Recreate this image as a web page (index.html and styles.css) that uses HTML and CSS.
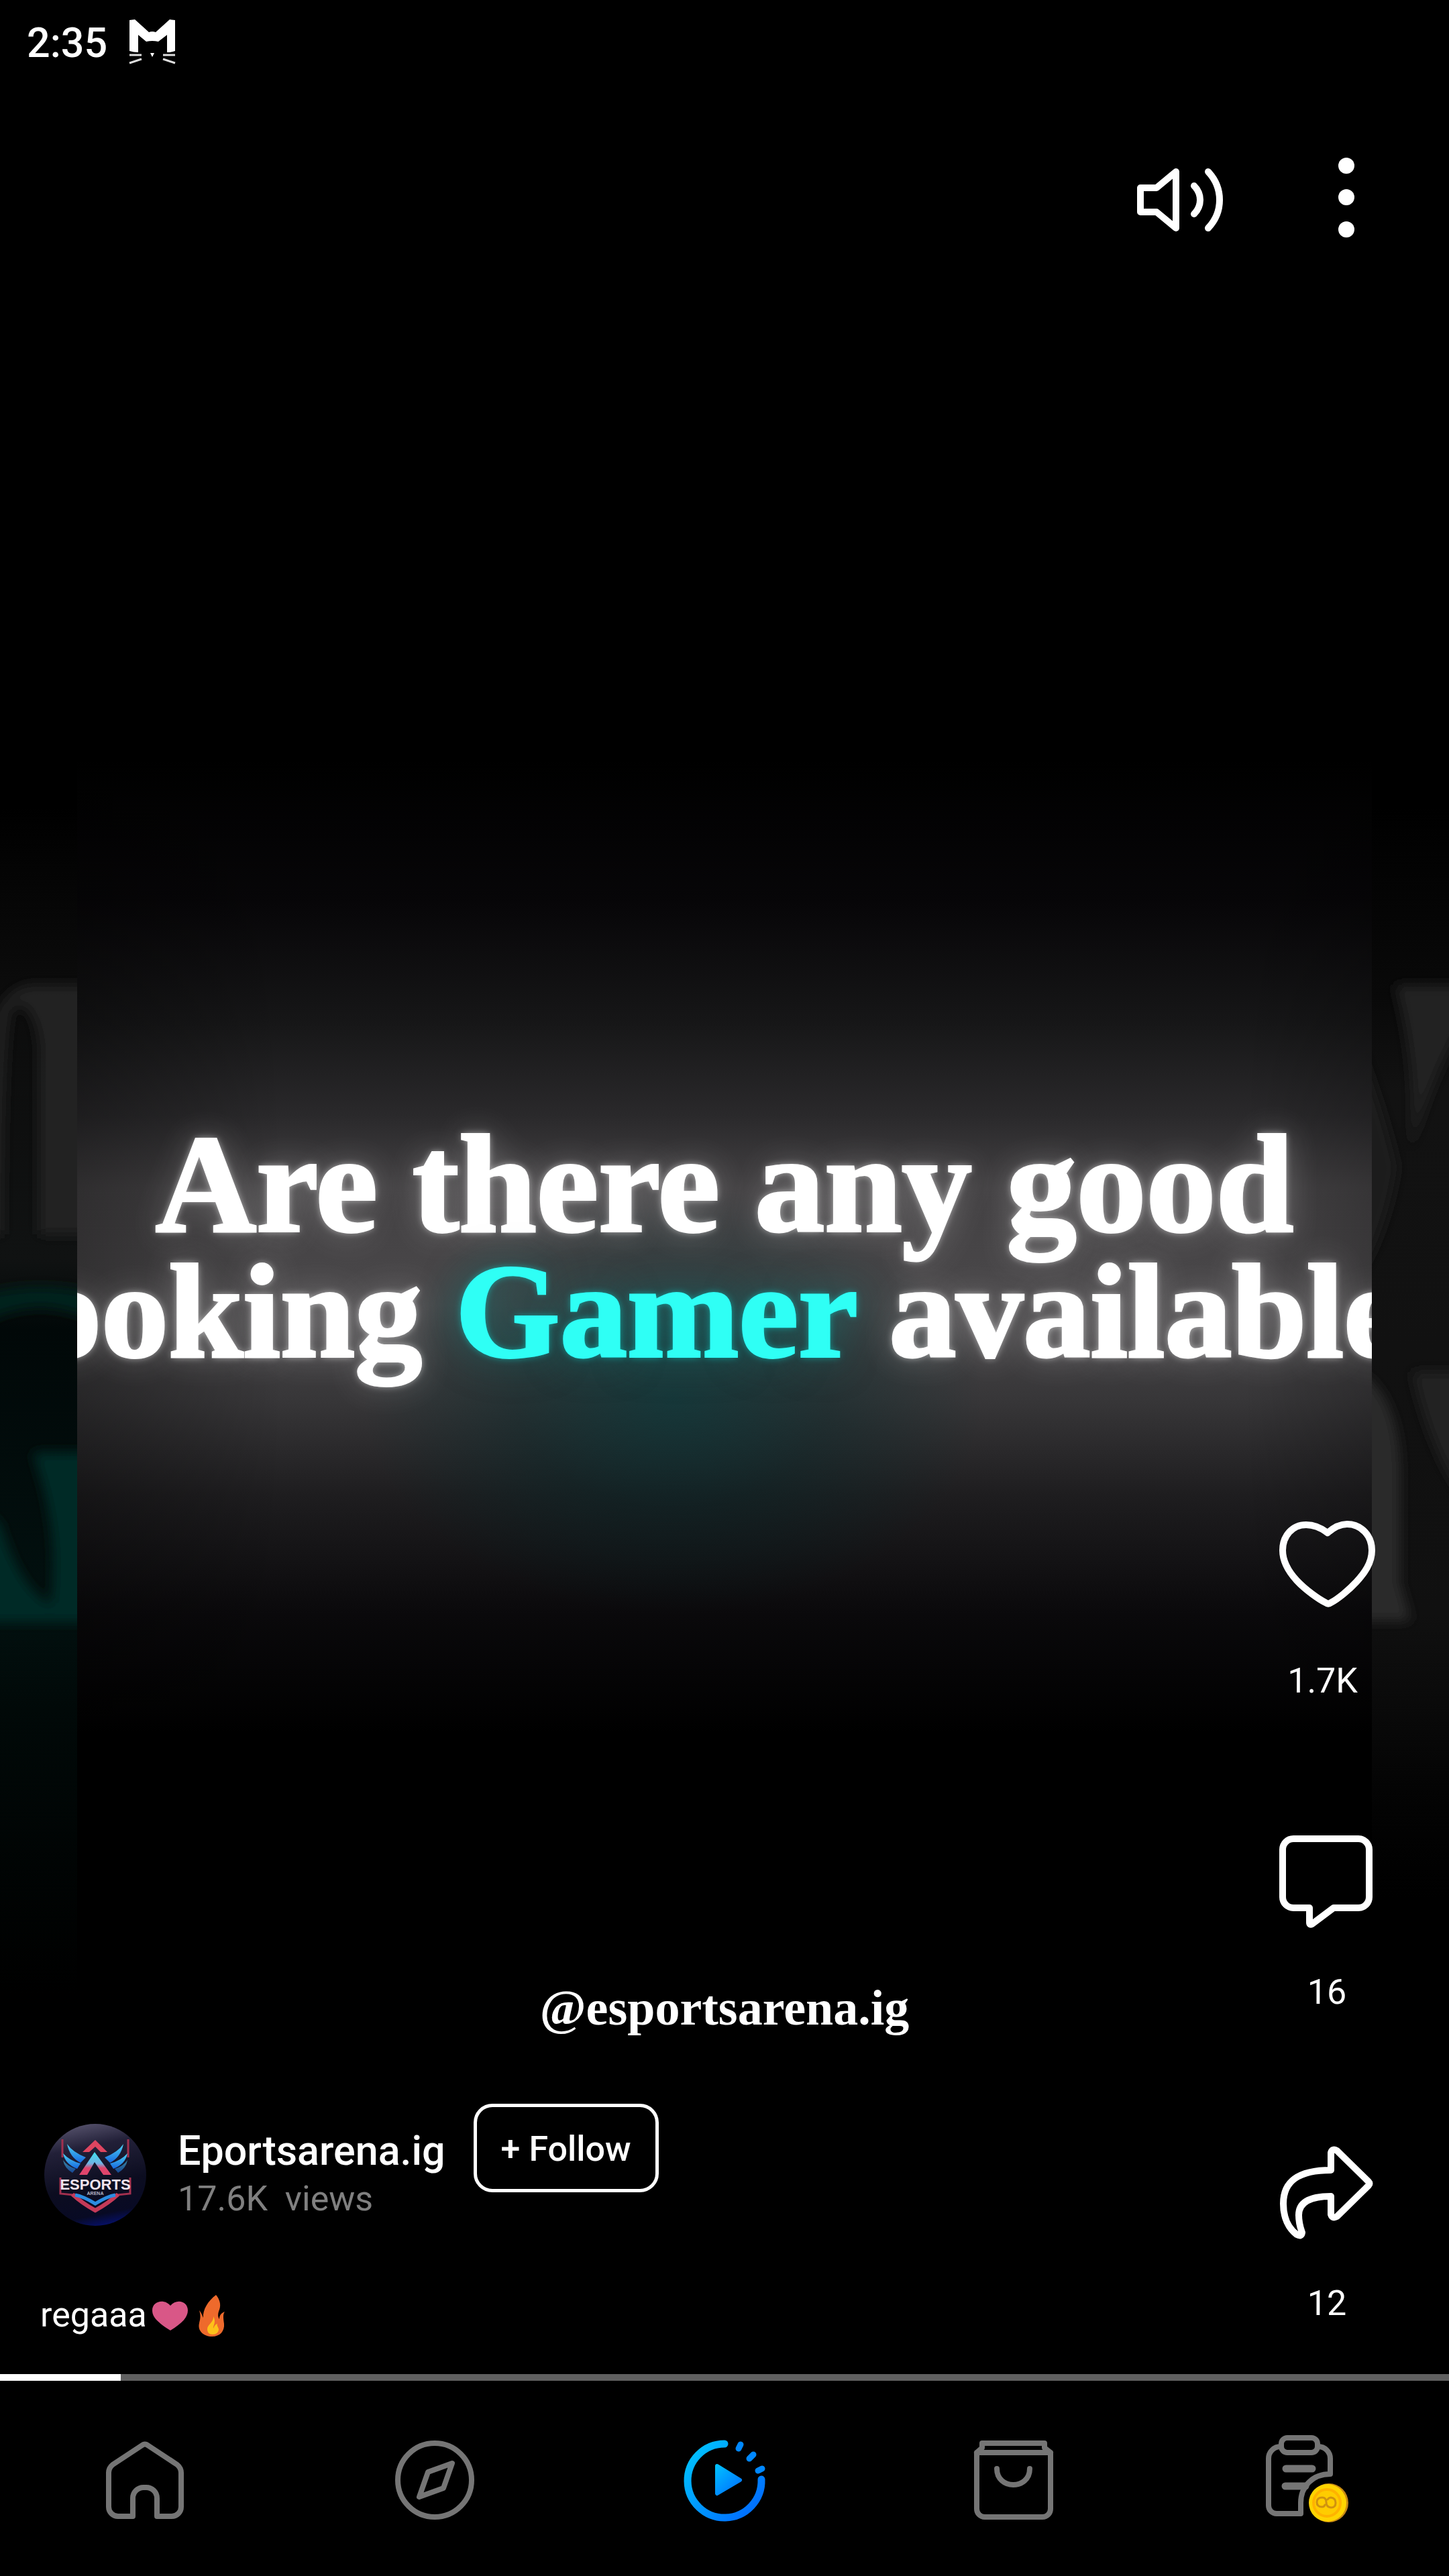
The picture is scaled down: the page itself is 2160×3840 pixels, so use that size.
FILE: index.html
```html
<!DOCTYPE html>
<html lang="en">
<head>
<meta charset="utf-8">
<meta name="viewport" content="width=device-width, initial-scale=1">
<title>Eportsarena.ig</title>
<link rel="stylesheet" href="styles.css">
</head>
<body>
<main class="stage">
  <div class="backdrop" aria-hidden="true">
    <svg class="side" viewBox="0 0 115 3539" preserveAspectRatio="none">
      <defs>
        <linearGradient id="fadeLeft" x1="0" y1="0" x2="0" y2="1">
          <stop offset=".34" stop-color="#000"/><stop offset=".42" stop-color="#0c0c0c"/>
          <stop offset=".53" stop-color="#101212"/><stop offset=".56" stop-color="#010808"/>
          <stop offset=".68" stop-color="#02100f"/><stop offset=".72" stop-color="#010908"/>
          <stop offset=".84" stop-color="#000"/>
        </linearGradient>
        <filter id="soft" x="-50%" y="-50%" width="200%" height="200%"><feGaussianBlur stdDeviation="9"/></filter>
      </defs>
      <rect width="115" height="3539" fill="url(#fadeLeft)"/>
      <g filter="url(#soft)">
        <path d="M-30 1600Q-10 1468 50 1468H150V1840H58V1560Q50 1490 20 1500Q4 1510 4 1840H-30Z" fill="#242424"/>
        <path d="M-30 1975V1930Q60 1905 150 1930V1975Q60 1925 -30 1975Z" fill="#04231f"/>
        <path d="M48 2165H150V2418H-40V2240L0 2270Q30 2370 76 2392Q90 2280 48 2165Z" fill="#042a26"/>
      </g>
    </svg>
    <svg class="side" viewBox="0 0 115 3539" preserveAspectRatio="none">
      <defs>
        <linearGradient id="fadeRight" x1="0" y1="0" x2="0" y2="1">
          <stop offset=".34" stop-color="#000"/><stop offset=".42" stop-color="#090909"/>
          <stop offset=".46" stop-color="#121212"/><stop offset=".68" stop-color="#101010"/>
          <stop offset=".76" stop-color="#030303"/><stop offset=".8" stop-color="#000"/>
        </linearGradient>
      </defs>
      <rect width="115" height="3539" fill="url(#fadeRight)"/>
      <g filter="url(#soft)">
        <path d="M34 1468H150V1500Q90 1600 58 1715Q68 1590 34 1468Z" fill="#242424"/>
        <path d="M-30 1530Q15 1640 38 1740Q20 1850 -30 1920Z" fill="#1b1b1b"/>
        <path d="M-30 2040Q42 2070 42 2200V2360L58 2416H-30Z" fill="#292929"/>
        <path d="M60 2045H150V2250Q90 2180 60 2045Z" fill="#242424"/>
      </g>
    </svg>
  </div>

  <section class="frame">
    <p class="headline"><span class="line">Are there any good</span><span class="line line-wide">looking <em class="accent">Gamer</em> available</span></p>
    <p class="watermark">@esportsarena.ig</p>
  </section>

  <div class="overlay">
    <header class="status">
      <time class="clock">2:35</time>
      <svg class="cat" viewBox="0 0 70 68" role="img" aria-label="Cat">
        <path fill="#fff" d="M1 2L9 1 30 20Q35 18 40 20L61 1 69 2V48Q64 50 57 50V24L44 34Q35 32 26 34L14 24V50Q7 50 1 48ZM32 51H38L35 57Z"/>
        <path fill="none" stroke="#ddd" stroke-width="3" d="M1 54H19M1 66L19 60M51 54H69M51 60L69 66"/>
      </svg>
    </header>
    <div class="top-actions">
      <button class="icon-button" aria-label="Sound">
        <svg class="sound" viewBox="53 50 132 96"><path d="M60 80H84L113 56V140L84 116H60ZM140 77Q149 86 149 98T140 119M161 56Q178 74 178 98T161 140"/></svg>
      </button>
      <button class="icon-button" aria-label="More options">
        <svg class="more" viewBox="354 37 26 122"><circle cx="367" cy="47" r="12"/><circle cx="367" cy="94" r="12"/><circle cx="367" cy="142" r="12"/></svg>
      </button>
    </div>

    <div class="bottom">
      <section class="info">
        <div class="author">
          <svg class="avatar" viewBox="0 0 153 153" role="img" aria-label="Esports Arena">
            <defs>
              <linearGradient id="disc" x1=".4" y1="0" x2=".6" y2="1">
                <stop offset="0" stop-color="#524e68"/><stop offset=".22" stop-color="#222038"/><stop offset=".6" stop-color="#0c0d20"/><stop offset=".88" stop-color="#080a24"/><stop offset="1" stop-color="#06106a"/>
              </linearGradient>
              <linearGradient id="wing" x1="0" y1="0" x2="0" y2="1">
                <stop offset="0" stop-color="#4fd4f2"/><stop offset="1" stop-color="#1668e0"/>
              </linearGradient>
              <linearGradient id="peak" x1="0" y1="0" x2="0" y2="1">
                <stop offset="0" stop-color="#3fe0f0"/><stop offset=".5" stop-color="#6fb4e4"/><stop offset=".7" stop-color="#e0456c"/><stop offset="1" stop-color="#e0456c"/>
              </linearGradient>
            </defs>
            <circle cx="76" cy="76" r="76" fill="url(#disc)"/>
            <g fill="none" stroke="#a2304e" stroke-width="3">
              <path d="M27 23V50M125 23V50M24 80V104L44 106M128 80V104L108 106"/>
              <path d="M42 105Q56 118 76 129Q96 118 110 105" stroke="#c43a58" stroke-width="6"/>
            </g>
            <path d="M57 42L76 24L94 42H84L76 34L67 42Z" fill="#dd4560"/>
            <g fill="url(#wing)">
              <path d="M34 30Q42 42 62 50L54 58Q38 50 34 30Z"/><path d="M28 44Q38 55 54 59L49 67Q31 60 28 44Z"/><path d="M28 54Q34 63 47 67L42 73Q30 66 28 54Z" opacity=".6"/>
              <path d="M118 30Q110 42 90 50L98 58Q114 50 118 30Z"/><path d="M124 44Q114 55 98 59L103 67Q121 60 124 44Z"/><path d="M124 54Q118 63 105 67L110 73Q122 66 124 54Z" opacity=".6"/>
            </g>
            <path d="M52 76L75 42L100 76H88L75 57L64 76Z" fill="url(#peak)"/>
            <path d="M46 106Q58 108 76 119Q94 108 106 106" fill="none" stroke="#2c8ce0" stroke-width="5"/>
            <text class="badge-title" x="76" y="98" text-anchor="middle">ESPORTS</text>
            <text class="badge-sub" x="76" y="106" text-anchor="middle">ARENA</text>
          </svg>
          <div class="names">
            <a class="name" href="#profile">Eportsarena.ig</a>
            <span class="views">17.6K&nbsp; views</span>
          </div>
          <button class="follow">+ Follow</button>
        </div>
        <p class="caption">regaaa<svg class="emoji" viewBox="0 0 62 64" role="img" aria-label="Heart"><path d="M35 53C16 41 8 33 8 23C8 9 26 5 35 16C44 5 61 9 61 23C61 33 53 42 35 53Z" fill="#d95787"/></svg><svg class="emoji" viewBox="0 0 62 64" role="img" aria-label="Fire"><path d="M41 0C29 9 21 22 22 34C20 30 19 26 16 23C19 32 17 37 16 42C13 54 23 62 35 62C47 62 54 54 53 43C52 35 51 29 54 25C49 27 46 30 46 36C43 32 44 27 46 22C49 14 46 6 41 0Z" fill="#ee6a2c"/><path d="M37 32C38 41 28 44 28 51C28 56 31 59 36 59C41 59 45 56 45 51C44 47 42 46 43 43C39 44 38 48 37 50C36 46 42 41 37 32Z" fill="#fdc11a"/></svg></p>
      </section>

      <aside class="rail">
        <button class="action" aria-label="Like, 1.7K">
          <svg class="action-icon" viewBox="0 0 148 144"><path d="M75 17C66 10 56 5 43 5C22 5 8 22 8 43C8 60 18 76 29 88C42 102 62 116 72 121Q76 124 80 121C90 116 107 102 118 90C130 77 141 62 141 43C141 21 125 4 104 4C93 4 84 9 75 17Z"/></svg>
          <span>1.7K&nbsp;</span>
        </button>
        <button class="action" aria-label="Comments, 16">
          <svg class="action-icon" viewBox="0 0 148 144"><path d="M24 9H121A16 16 0 0 1 137 25V96A16 16 0 0 1 121 112H84L52 136Q48 138 48 134V112H24A16 16 0 0 1 8 96V25A16 16 0 0 1 24 9Z"/></svg>
          <span>16</span>
        </button>
        <button class="action" aria-label="Share, 12">
          <svg class="action-icon" viewBox="0 0 148 144"><path d="M80 39V13Q82 6 89 10L136 56Q139 59 136 62L89 108Q82 112 80 105V78C44 78 32 90 32 106C32 119 35 126 37 132Q36 139 29 135C17 126 9 110 9 89C9 55 32 39 80 39Z"/></svg>
          <span>12</span>
        </button>
      </aside>
    </div>
  </div>
</main>

<progress class="progress" value="8.34" max="100" aria-label="Playback"></progress>

<nav class="tabs">
  <a class="tab" href="#home" aria-label="Home"><svg class="tab-icon" viewBox="0 0 140 140"><path d="M52 124V97A16 16 0 0 1 68 81H72A16 16 0 0 1 88 97V124H110A14 14 0 0 0 124 110V59Q124 52 118 47L74 18Q70 15 66 18L22 47Q16 52 16 59V110A14 14 0 0 0 30 124Z"/></svg></a>
  <a class="tab" href="#explore" aria-label="Explore"><svg class="tab-icon" viewBox="0 0 140 140"><circle cx="70" cy="70" r="55"/><path d="M96 45L60 58L47 95L83 82Z"/></svg></a>
  <a class="tab" href="#videos" aria-label="Videos" aria-current="page"><svg class="tab-icon" viewBox="0 0 140 140">
    <defs><linearGradient id="blue" gradientUnits="userSpaceOnUse" x1="20" y1="30" x2="110" y2="110"><stop offset="0" stop-color="#00c0ff"/><stop offset="1" stop-color="#0072ff"/></linearGradient>
    <linearGradient id="blueSmall" gradientUnits="userSpaceOnUse" x1="56" y1="50" x2="88" y2="84"><stop offset="0" stop-color="#00c0ff"/><stop offset="1" stop-color="#007aff"/></linearGradient></defs>
    <path d="M70 16A55 55 0 1 0 125 69" stroke="url(#blue)" stroke-width="11"/>
    <path d="M94 17L91 23M113 32L107 38M126 53L120 56" stroke="#0088ff" stroke-width="9"/>
    <path d="M59 49L93 70L59 90Z" fill="url(#blueSmall)" stroke="url(#blueSmall)" stroke-width="6"/></svg></a>
  <a class="tab" href="#shop" aria-label="Shop"><svg class="tab-icon" viewBox="0 0 140 140"><path d="M14 29H124V113A12 12 0 0 1 112 125H26A12 12 0 0 1 14 113ZM14 29L22 22V15H115V22L124 29M44 53C44 85 93 85 93 53"/></svg></a>
  <a class="tab" href="#tasks" aria-label="Tasks"><svg class="tab-icon" viewBox="0 0 140 140">
    <path d="M35 20A18 18 0 0 0 17 38V108A12 12 0 0 0 29 120H65V104C65 80 82 61 109 61V38A18 18 0 0 0 91 20"/>
    <rect x="36" y="7" width="54" height="22" rx="9"/>
    <path d="M43 53H82M42 79H72" stroke-width="11"/>
    <circle cx="107" cy="104" r="29" fill="#c98a14" stroke="none"/><circle cx="105" cy="104" r="28" fill="#ffd400" stroke="none"/>
    <circle cx="104" cy="104" r="20" fill="#ffcc00" stroke="#ffb300" stroke-width="4"/>
    <path d="M97 110Q89 110 89 103T97 96Q103 96 103 103T110 111Q117 111 117 104T110 96Q107 96 105 99M101 107Q100 110 97 110" stroke="#d0920f" stroke-width="3"/></svg></a>
</nav>
</body>
</html>
```
FILE: styles.css
```css
* { box-sizing: border-box; }

body {
  margin: 0;
  min-height: 100vh;
  display: flex;
  flex-direction: column;
  background: #000;
  color: #fff;
  font-family: Roboto, "Liberation Sans", sans-serif;
}

p { margin: 0; }
svg { display: block; flex: none; }
a { color: inherit; text-decoration: none; }

button {
  margin: 0;
  padding: 0;
  border: 0;
  background: none;
  color: inherit;
  font: inherit;
  cursor: pointer;
}

/* Video, its dimmed backdrop and the controls share one grid cell */
.stage {
  flex: 1;
  display: grid;
  grid-template: minmax(0, 1fr) / minmax(0, 1fr);
}

.backdrop,
.frame,
.overlay { grid-area: 1 / 1; }

.backdrop {
  contain: size;
  display: flex;
  justify-content: space-between;
}

.side {
  width: 5.33%;
  height: 100%;
}

.frame {
  margin: 0 5.33%;
  padding-top: 43.5vh;
  overflow: hidden;
  background:
    radial-gradient(24% 9% at 46% 59%, rgba(0, 56, 58, .6), rgba(0, 40, 42, .35) 50%, transparent),
    linear-gradient(90deg, rgba(0, 0, 0, .3), transparent 16%, transparent 90%, rgba(0, 0, 0, .2)),
    linear-gradient(#000 32%, #070608 38%, #161617 43%, #2a292b 47%, #434143 50%, #4a484a 55%, #373638 59%, #1e1d1f 63%, #0a090b 68%, #000 73%);
  font-family: "Liberation Serif", serif;
  font-weight: 700;
}

.headline {
  font-size: 208px;
  line-height: 190px;
  white-space: nowrap;
  -webkit-text-stroke: 4px currentColor;
  text-shadow: 0 0 12px rgba(255, 255, 255, .7), 0 0 50px rgba(255, 255, 255, .3);
}

.line {
  display: block;
  text-align: center;
}

.line-wide {
  margin-left: -6.2%;
  font-size: 200px;
  text-align: left;
}

.accent {
  color: #2ffff5;
  font-style: normal;
  text-shadow: 0 0 12px rgba(0, 255, 245, .6), 0 0 60px rgba(0, 150, 145, .5);
}

.watermark {
  margin-top: 23.5vh;
  font-size: 74px;
  line-height: 80px;
  text-align: center;
}

.overlay {
  display: flex;
  flex-direction: column;
}

.status {
  display: flex;
  gap: 32px;
  padding: 28px 40px 0;
}

.clock {
  font-size: 61px;
  line-height: 72px;
  font-weight: 500;
}

.cat {
  width: 70px;
  height: 68px;
}

.top-actions {
  display: flex;
  justify-content: flex-end;
  align-items: center;
  gap: 169px;
  padding: 137px 140px 0;
}

.sound {
  width: 132px;
  height: 96px;
  fill: none;
  stroke: #fff;
  stroke-width: 10px;
  stroke-linecap: round;
  stroke-linejoin: round;
}

.more {
  width: 26px;
  height: 122px;
  overflow: visible;
  fill: #fff;
}

.bottom {
  display: flex;
  justify-content: space-between;
  align-items: flex-end;
  margin-top: auto;
  padding: 0 108px 54px 60px;
}

.info {
  display: flex;
  flex-direction: column;
  gap: 102px;
}

.author {
  display: flex;
  align-items: flex-start;
  padding-left: 6px;
}

.avatar {
  width: 153px;
  height: 153px;
  margin-top: 30px;
}

.badge-title {
  fill: #f2e4ee;
  font: 700 22px "Liberation Sans", sans-serif;
}

.badge-sub {
  fill: #b4b4c4;
  font: 700 7px "Liberation Sans", sans-serif;
}

.names {
  display: flex;
  flex-direction: column;
  margin: 30px 42px 0 46px;
}

.name {
  font-size: 61px;
  line-height: 80px;
  font-weight: 500;
}

.views {
  color: #808080;
  font-size: 52px;
  line-height: 64px;
}

.follow {
  padding: 4px 36px 0;
  border: 5px solid #fff;
  border-radius: 28px;
  font-size: 52px;
  line-height: 118px;
  font-weight: 500;
}

.caption {
  display: flex;
  font-size: 52px;
  line-height: 60px;
}

.emoji {
  width: 62px;
  height: 64px;
}

.rail {
  display: flex;
  flex-direction: column;
  gap: 196px;
  padding-bottom: 21px;
}

.action {
  display: flex;
  flex-direction: column;
  align-items: center;
  gap: 64px;
  font-size: 52px;
  line-height: 60px;
}

.action-icon {
  width: 148px;
  height: 144px;
  overflow: visible;
  fill: none;
  stroke: #fff;
  stroke-width: 10px;
  stroke-linejoin: round;
}

.progress {
  appearance: none;
  display: block;
  width: 100%;
  height: 10px;
  border: 0;
  background: #606060;
}

.progress::-webkit-progress-bar { background: #606060; }
.progress::-webkit-progress-value { background: #fff; }
.progress::-moz-progress-bar { background: #fff; }

.tabs {
  display: grid;
  grid-template-columns: repeat(5, 1fr);
  justify-items: center;
  padding: 78px 0 73px;
}

.tab-icon {
  width: 140px;
  height: 140px;
  fill: none;
  stroke: #757575;
  stroke-width: 8px;
  stroke-linecap: round;
  stroke-linejoin: round;
}
```
